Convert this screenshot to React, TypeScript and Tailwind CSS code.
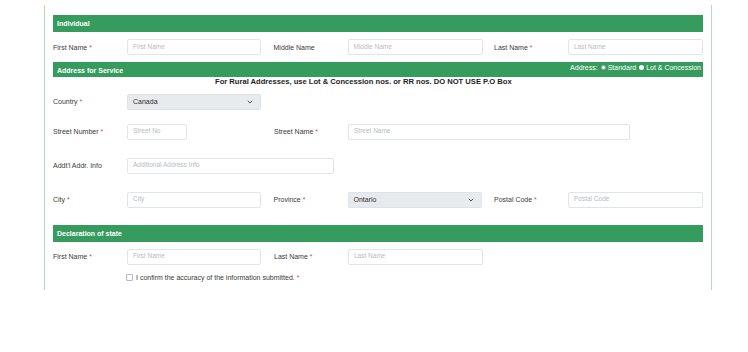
import React from "react";

const Req = () => <span className="text-[#e0454f]"> *</span>;

function Label({ text, req }: { text: string; req?: boolean }) {
  return (
    <div className="w-[74px] shrink-0 text-[7px] text-[#3a3a3a] leading-none">
      {text}
      {req && <Req />}
    </div>
  );
}

function Input({ ph, w = "w-[134px]" }: { ph: string; w?: string }) {
  return (
    <div
      className={`${w} h-[16px] shrink-0 rounded-[2px] border border-[#e2e5e8] bg-white flex items-center pl-[5px] text-[6.5px] text-[#b8bcc0] leading-none`}
    >
      {ph}
    </div>
  );
}

function Select({ value }: { value: string }) {
  return (
    <div className="w-[134px] h-[16px] shrink-0 rounded-[2px] border border-[#dfe2e6] bg-[#e8ebee] flex items-center justify-between pl-[5px] pr-[7px] text-[7px] text-[#2e2e2e] leading-none">
      <span>{value}</span>
      <svg width="6" height="4" viewBox="0 0 6 4">
        <path d="M0.8 0.8 L3 3 L5.2 0.8" fill="none" stroke="#444" strokeWidth="0.9" />
      </svg>
    </div>
  );
}

function Field({
  label,
  req,
  children,
  last,
}: {
  label: string;
  req?: boolean;
  children: React.ReactNode;
  last?: boolean;
}) {
  return (
    <div className={`flex items-center ${last ? "" : "w-[221px]"}`}>
      <Label text={label} req={req} />
      {children}
    </div>
  );
}

function Header({ title }: { title: string }) {
  return (
    <div className="h-[17px] bg-[#369c5e] flex items-center pl-[4px] text-[7px] font-bold text-white leading-none">
      {title}
    </div>
  );
}

export default function App() {
  return (
    <div
      className="w-[748px] h-[352px] bg-white"
      style={{ fontFamily: '"Liberation Sans", Arial, sans-serif' }}
    >
      <div className="ml-[44px] mt-[5px] w-[668px] h-[285px] border-l border-r border-[#b2dcbf] px-[8px] pt-[10px]">
        <Header title="Individual" />

        <div className="flex mt-[7px]">
          <Field label="First Name" req>
            <Input ph="First Name" />
          </Field>
          <Field label="Middle Name">
            <Input ph="Middle Name" w="w-[135px]" />
          </Field>
          <Field label="Last Name" req last>
            <Input ph="Last Name" w="w-[135px]" />
          </Field>
        </div>

        <div className="mt-[7px] h-[15px] bg-[#369c5e] flex justify-between pl-[4px] pr-[2px] text-white leading-none">
          <div className="text-[7px] font-bold pt-[5px]">Address for Service</div>
          <div className="text-[7px] pt-[2px] flex items-start gap-[3px]">
            <span>Address:</span>
            <span className="inline-flex items-center gap-[2px]">
              <span className="w-[5px] h-[5px] rounded-full bg-white border-[1.5px] border-[#9aa59e] inline-block" />
              Standard
            </span>
            <span className="inline-flex items-center gap-[2px]">
              <span className="w-[5px] h-[5px] rounded-full bg-white inline-block" />
              Lot &amp; Concession
            </span>
          </div>
        </div>

        <div className="text-[7.6px] font-bold text-[#1e1e1e] leading-none mt-[1px] pl-[162px] whitespace-nowrap">
          For Rural Addresses, use Lot &amp; Concession nos. or RR nos. DO NOT USE P.O Box
        </div>

        <div className="flex mt-[8px]">
          <Field label="Country" req>
            <Select value="Canada" />
          </Field>
        </div>

        <div className="flex mt-[14px]">
          <Field label="Street Number" req>
            <Input ph="Street No" w="w-[60px]" />
          </Field>
          <Field label="Street Name" req last>
            <Input ph="Street Name" w="w-[282px]" />
          </Field>
        </div>

        <div className="flex mt-[18px]">
          <Field label="Addt'l Addr. Info" last>
            <Input ph="Additional Address Info" w="w-[207px]" />
          </Field>
        </div>

        <div className="flex mt-[18px]">
          <Field label="City" req>
            <Input ph="City" />
          </Field>
          <Field label="Province" req>
            <Select value="Ontario" />
          </Field>
          <Field label="Postal Code" req last>
            <Input ph="Postal Code" w="w-[135px]" />
          </Field>
        </div>

        <div className="mt-[17px]">
          <Header title="Declaration of state" />
        </div>

        <div className="flex mt-[7px]">
          <Field label="First Name" req>
            <Input ph="First Name" />
          </Field>
          <Field label="Last Name" req last>
            <Input ph="Last Name" w="w-[135px]" />
          </Field>
        </div>

        <div className="flex items-center mt-[9px] pl-[73px] text-[7px] text-[#3a3a3a] leading-none">
          <span className="w-[7px] h-[7px] border border-[#b5b9bd] rounded-[1px] bg-white inline-block mr-[3px]" />
          <span>
            I confirm the accuracy of the information submitted.
            <Req />
          </span>
        </div>
      </div>
    </div>
  );
}
